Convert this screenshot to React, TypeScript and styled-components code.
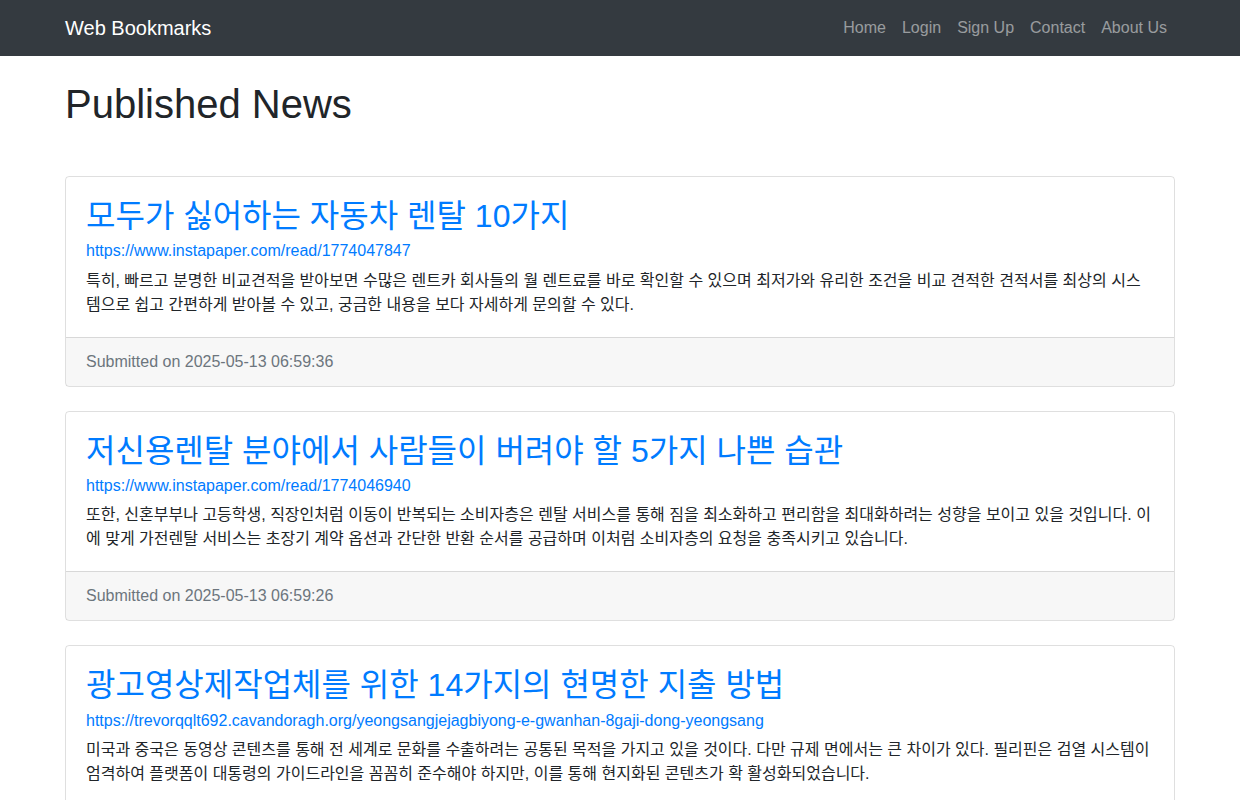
import React from "react";
import styled, { createGlobalStyle } from "styled-components";

const Global = createGlobalStyle`
  * { box-sizing: border-box; }
  html, body { margin: 0; padding: 0; height: 100%; overflow: hidden; }
  body {
    font-family: "Liberation Sans", "Noto Sans CJK KR", sans-serif;
    font-size: 16px;
    line-height: 24px;
    color: #212529;
    background: #fff;
  }
`;

const Nav = styled.nav`
  background: #343a40;
  height: 56px;
  display: flex;
  align-items: center;
`;
const Container = styled.div`
  width: 1140px;
  margin: 0 auto;
  padding: 0 15px;
`;
const NavInner = styled(Container)`
  display: flex;
  justify-content: space-between;
  align-items: center;
`;
const Brand = styled.a`
  font-size: 20px;
  line-height: 30px;
  color: #fff;
`;
const NavLinks = styled.div`
  display: flex;
`;
const NavLink = styled.a`
  padding: 8px;
  color: rgba(255, 255, 255, 0.5);
`;
const Title = styled.h1`
  font-size: 40px;
  line-height: 48px;
  font-weight: 400;
  margin: 24px 0 48px;
`;
const Card = styled.article`
  border: 1px solid rgba(0, 0, 0, 0.125);
  border-radius: 4px;
  margin-bottom: 24px;
`;
const CardBody = styled.div`
  padding: 20px;
`;
const CardTitle = styled.a`
  display: block;
  font-size: 32px;
  line-height: 38.4px;
  font-weight: 400;
  color: #007bff;
  margin-bottom: 4px;
`;
const CardUrl = styled.a`
  display: block;
  color: #007bff;
`;
const CardText = styled.p`
  margin: 5.3px 0 0;
`;
const CardFooter = styled.div`
  padding: 12px 20px;
  background: rgba(0, 0, 0, 0.03);
  border-top: 1px solid rgba(0, 0, 0, 0.125);
  color: #6c757d;
`;

const news = [
  {
    t: "모두가 싫어하는 자동차 렌탈 10가지",
    u: "https://www.instapaper.com/read/1774047847",
    d: "특히, 빠르고 분명한 비교견적을 받아보면 수많은 렌트카 회사들의 월 렌트료를 바로 확인할 수 있으며 최저가와 유리한 조건을 비교 견적한 견적서를 최상의 시스템으로 쉽고 간편하게 받아볼 수 있고, 궁금한 내용을 보다 자세하게 문의할 수 있다.",
    s: "Submitted on 2025-05-13 06:59:36",
  },
  {
    t: "저신용렌탈 분야에서 사람들이 버려야 할 5가지 나쁜 습관",
    u: "https://www.instapaper.com/read/1774046940",
    d: "또한, 신혼부부나 고등학생, 직장인처럼 이동이 반복되는 소비자층은 렌탈 서비스를 통해 짐을 최소화하고 편리함을 최대화하려는 성향을 보이고 있을 것입니다. 이에 맞게 가전렌탈 서비스는 초장기 계약 옵션과 간단한 반환 순서를 공급하며 이처럼 소비자층의 요청을 충족시키고 있습니다.",
    s: "Submitted on 2025-05-13 06:59:26",
  },
  {
    t: "광고영상제작업체를 위한 14가지의 현명한 지출 방법",
    u: "https://trevorqqlt692.cavandoragh.org/yeongsangjejagbiyong-e-gwanhan-8gaji-dong-yeongsang",
    d: "미국과 중국은 동영상 콘텐츠를 통해 전 세계로 문화를 수출하려는 공통된 목적을 가지고 있을 것이다. 다만 규제 면에서는 큰 차이가 있다. 필리핀은 검열 시스템이 엄격하여 플랫폼이 대통령의 가이드라인을 꼼꼼히 준수해야 하지만, 이를 통해 현지화된 콘텐츠가 확 활성화되었습니다.",
    s: "Submitted on 2025-05-13 06:59:16",
  },
];

export default function App() {
  return (
    <>
      <Global />
      <Nav>
        <NavInner>
          <Brand>Web Bookmarks</Brand>
          <NavLinks>
            {["Home", "Login", "Sign Up", "Contact", "About Us"].map((l) => (
              <NavLink key={l}>{l}</NavLink>
            ))}
          </NavLinks>
        </NavInner>
      </Nav>
      <Container>
        <Title>Published News</Title>
        {news.map((n) => (
          <Card key={n.u}>
            <CardBody>
              <CardTitle>{n.t}</CardTitle>
              <CardUrl>{n.u}</CardUrl>
              <CardText>{n.d}</CardText>
            </CardBody>
            <CardFooter>{n.s}</CardFooter>
          </Card>
        ))}
      </Container>
    </>
  );
}
